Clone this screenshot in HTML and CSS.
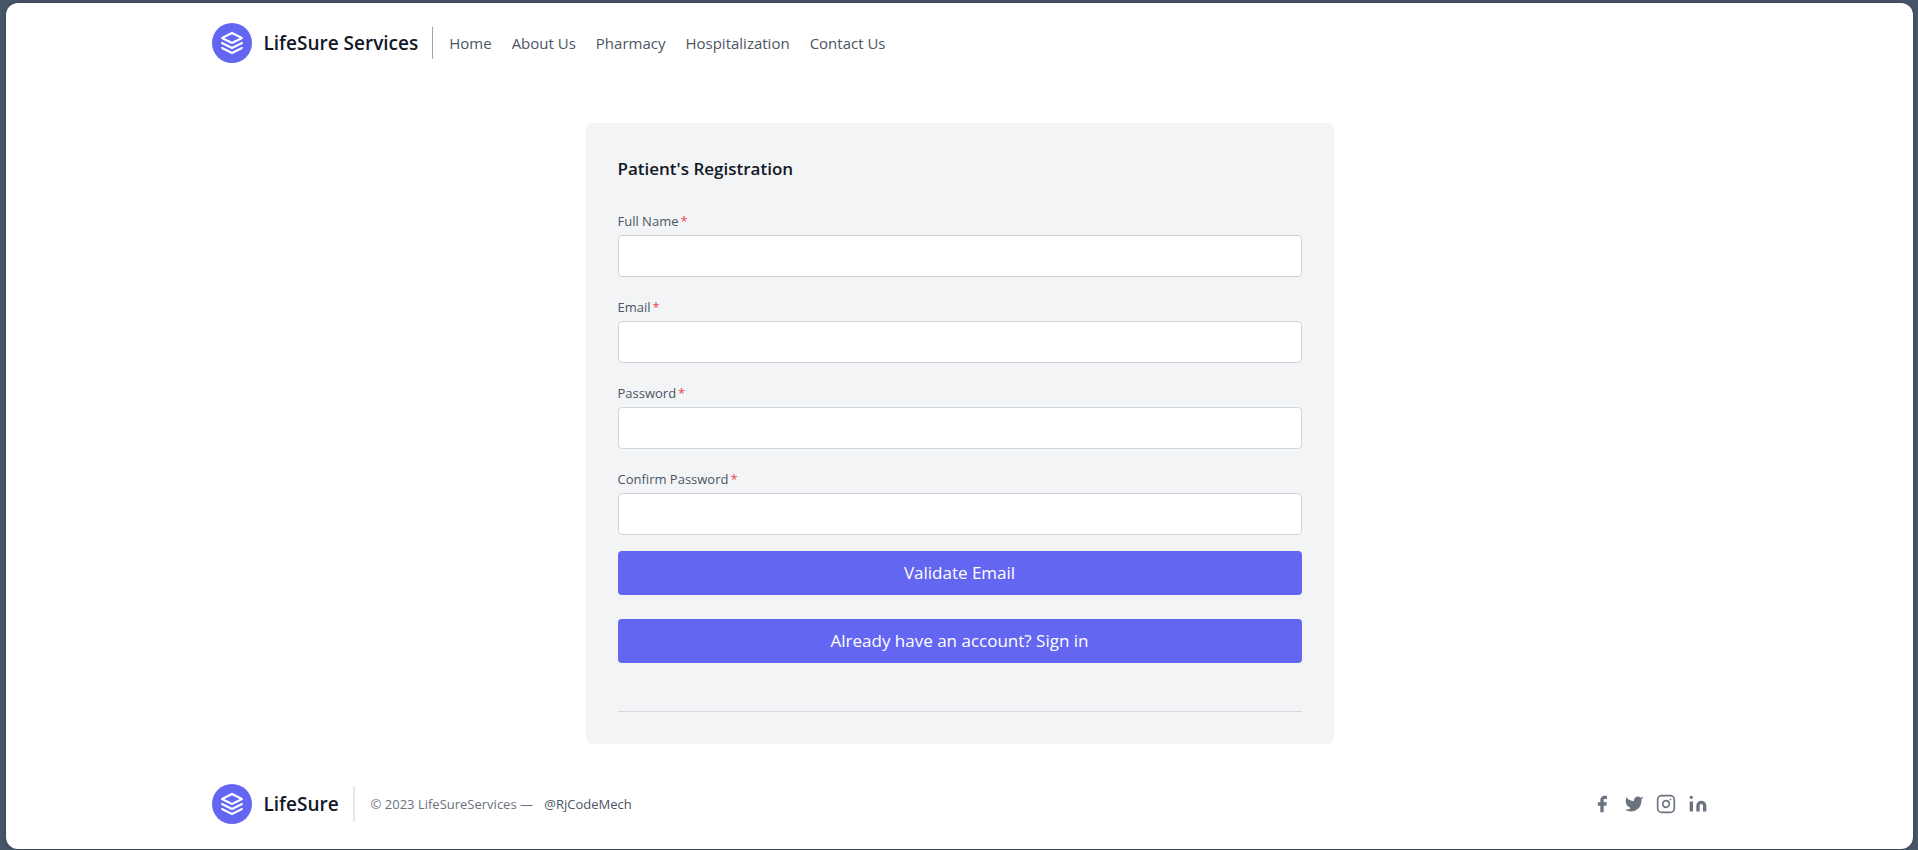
FILE: index.html
```html
<!DOCTYPE html>
<html lang="en">
<head>
<meta charset="utf-8">
<meta name="viewport" content="width=device-width, initial-scale=1">
<title>LifeSure Services</title>
<link rel="stylesheet" href="styles.css">
</head>
<body>
<div class="sheet">
  <header class="container header">
    <a class="brand" href="#">
      <svg class="logo" viewBox="0 0 24 24" aria-hidden="true"><path d="M12 2L2 7l10 5 10-5-10-5zM2 17l10 5 10-5M2 12l10 5 10-5"/></svg>
      <span>LifeSure Services</span>
    </a>
    <nav class="nav">
      <a href="#">Home</a>
      <a href="#">About Us</a>
      <a href="#">Pharmacy</a>
      <a href="#">Hospitalization</a>
      <a href="#">Contact Us</a>
    </nav>
  </header>

  <main class="container">
    <form class="card">
      <h2 class="title">Patient's Registration</h2>
      <div class="field">
        <label for="name">Full Name<span class="required">*</span></label>
        <input id="name" type="text">
      </div>
      <div class="field">
        <label for="email">Email<span class="required">*</span></label>
        <input id="email" type="email">
      </div>
      <div class="field">
        <label for="password">Password<span class="required">*</span></label>
        <input id="password" type="password">
      </div>
      <div class="field">
        <label for="confirm">Confirm Password<span class="required">*</span></label>
        <input id="confirm" type="password">
      </div>
      <div class="actions">
        <button class="button" type="button">Validate Email</button>
        <button class="button" type="button">Already have an account? Sign in</button>
      </div>
      <hr class="rule">
    </form>
  </main>

  <footer class="container footer">
    <a class="brand" href="#">
      <svg class="logo" viewBox="0 0 24 24" aria-hidden="true"><path d="M12 2L2 7l10 5 10-5-10-5zM2 17l10 5 10-5M2 12l10 5 10-5"/></svg>
      <span>LifeSure</span>
    </a>
    <p class="copyright">© 2023 LifeSureServices — <a href="#">@RjCodeMech</a></p>
    <div class="social">
      <a href="#" aria-label="Facebook"><svg class="solid" viewBox="0 0 24 24"><path d="M18 2h-3a5 5 0 00-5 5v3H7v4h3v8h4v-8h3l1-4h-4V7a1 1 0 011-1h3z"/></svg></a>
      <a href="#" aria-label="Twitter"><svg class="solid" viewBox="0 0 24 24"><path d="M23 3a10.9 10.9 0 01-3.14 1.53 4.48 4.48 0 00-7.86 3v1A10.66 10.66 0 013 4s-4 9 5 13a11.64 11.64 0 01-7 2c9 5 20 0 20-11.5a4.5 4.5 0 00-.08-.83A7.72 7.72 0 0023 3z"/></svg></a>
      <a href="#" aria-label="Instagram"><svg class="outline" viewBox="0 0 24 24"><rect width="20" height="20" x="2" y="2" rx="5" ry="5"/><path d="M16 11.37A4 4 0 1112.63 8 4 4 0 0116 11.37zm1.5-4.87h.01"/></svg></a>
      <a href="#" aria-label="LinkedIn"><svg class="solid" viewBox="0 0 24 24"><path d="M16 8a6 6 0 016 6v7h-4v-7a2 2 0 00-2-2 2 2 0 00-2 2v7h-4v-7a6 6 0 016-6zM2 9h4v12H2z"/><circle cx="4" cy="4" r="2"/></svg></a>
    </div>
  </footer>
</div>
</body>
</html>
```

FILE: styles.css
```css
* {
  box-sizing: border-box;
  margin: 0;
}

body {
  padding: 3px 5px 1px 6px;
  background: #475569;
  font-family: "Segoe UI", "Open Sans", "Noto Sans", sans-serif;
  font-size: 15px;
  line-height: 24px;
  color: #4b5563;
}

a {
  color: inherit;
  text-decoration: none;
}

.sheet {
  background: #fff;
  border-radius: 12px;
  box-shadow: 0 0 4px rgba(0, 0, 0, 0.25);
}

.container {
  max-width: 1536px;
  margin: 0 auto;
  padding: 20px;
}

.header,
.footer,
.brand,
.social {
  display: flex;
  align-items: center;
}

.brand {
  gap: 12px;
  font-size: 19px;
  font-weight: 600;
  line-height: 28px;
  color: #111827;
}

.logo {
  width: 40px;
  height: 40px;
  padding: 8px;
  border-radius: 50%;
  background: #6366f1;
  fill: none;
  stroke: #fff;
  stroke-width: 2;
  stroke-linecap: round;
  stroke-linejoin: round;
}

.nav {
  display: flex;
  align-items: center;
  gap: 20px;
  height: 32px;
  margin-left: 14px;
  padding-left: 16px;
  border-left: 1px solid #9ca3af;
}

main.container {
  padding: 40px 20px;
}

.card {
  display: flex;
  flex-direction: column;
  width: 50%;
  margin: 0 auto;
  padding: 32px;
  border-radius: 8px;
  background: #f3f4f6;
}

.title {
  margin-bottom: 24px;
  font-size: 17px;
  font-weight: 600;
  line-height: 28px;
  color: #111827;
}

.field {
  display: flex;
  flex-direction: column;
  margin-bottom: 16px;
}

.field label {
  font-size: 13px;
  line-height: 28px;
}

.required {
  margin-left: 2px;
  color: #ef4444;
}

.field input {
  height: 42px;
  padding: 4px 12px;
  border: 1px solid #d1d5db;
  border-radius: 4px;
  background: #fff;
  font: inherit;
}

.actions {
  display: flex;
  flex-direction: column;
  gap: 24px;
}

.button {
  padding: 8px 32px;
  border: 0;
  border-radius: 4px;
  background: #6366f1;
  font-family: inherit;
  font-size: 17px;
  line-height: 28px;
  color: #fff;
}

.rule {
  margin-top: 48px;
  border: 0;
  border-top: 1px solid #d8dade;
}

.footer {
  padding: 0 20px 25px;
}

.copyright {
  margin-left: 14px;
  padding: 8px 0 8px 16px;
  border-left: 2px solid #e5e7eb;
  font-size: 13px;
  line-height: 20px;
  color: #6b7280;
}

.copyright a {
  margin-left: 8px;
  color: #4b5563;
}

.social {
  gap: 12px;
  margin-left: auto;
  color: #6b7280;
}

.social svg {
  display: block;
  width: 20px;
  height: 20px;
}

.solid {
  fill: currentColor;
}

.outline {
  fill: none;
  stroke: currentColor;
  stroke-width: 2;
  stroke-linecap: round;
  stroke-linejoin: round;
}
```
